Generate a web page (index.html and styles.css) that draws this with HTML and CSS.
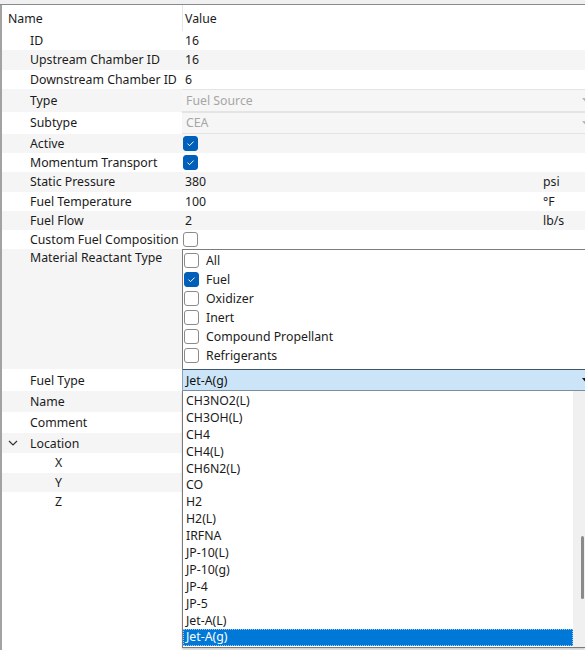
FILE: index.html
```html
<!DOCTYPE html>
<html>
<head>
<meta charset="utf-8">
<link rel="stylesheet" href="styles.css">
</head>
<body>
<div class="top"></div>
<div class="panel">
  <div class="row head"><div class="k">Name</div><div class="v">Value</div></div>
  <div class="row"><div class="k">ID</div><div class="v">16</div></div>
  <div class="row alt"><div class="k">Upstream Chamber ID</div><div class="v">16</div></div>
  <div class="row"><div class="k">Downstream Chamber ID</div><div class="v">6</div></div>
  <div class="row alt r23"><div class="k">Type</div><div class="v combo dis"><span>Fuel Source</span><svg class="arr" viewBox="0 0 7 4"><path d="M0 0 H7 L3.5 4 Z"/></svg></div></div>
  <div class="row r22"><div class="k">Subtype</div><div class="v combo dis"><span>CEA</span><svg class="arr" viewBox="0 0 7 4"><path d="M0 0 H7 L3.5 4 Z"/></svg></div></div>
  <div class="row alt"><div class="k">Active</div><div class="v cbv"><span class="cb on"><svg viewBox="0 0 15 15"><path d="M4 7.6 L6.4 10 L11 5.3" /></svg></span></div></div>
  <div class="row"><div class="k">Momentum Transport</div><div class="v cbv"><span class="cb on"><svg viewBox="0 0 15 15"><path d="M4 7.6 L6.4 10 L11 5.3" /></svg></span></div></div>
  <div class="row alt"><div class="k">Static Pressure</div><div class="v unitv"><span>380</span><span class="unit">psi</span></div></div>
  <div class="row"><div class="k">Fuel Temperature</div><div class="v unitv"><span>100</span><span class="unit">°F</span></div></div>
  <div class="row alt"><div class="k">Fuel Flow</div><div class="v unitv"><span>2</span><span class="unit">lb/s</span></div></div>
  <div class="row"><div class="k">Custom Fuel Composition</div><div class="v cbv"><span class="cb"></span></div></div>
  <div class="row mat">
    <div class="k alt">Material Reactant Type</div>
    <div class="v listbox">
      <div class="li"><span class="cb"></span>All</div>
      <div class="li"><span class="cb on"><svg viewBox="0 0 15 15"><path d="M4 7.6 L6.4 10 L11 5.3" /></svg></span>Fuel</div>
      <div class="li"><span class="cb"></span>Oxidizer</div>
      <div class="li"><span class="cb"></span>Inert</div>
      <div class="li"><span class="cb"></span>Compound Propellant</div>
      <div class="li"><span class="cb"></span>Refrigerants</div>
    </div>
  </div>
  <div class="row r22"><div class="k">Fuel Type</div><div class="v combo act"><span>Jet-A(g)</span><svg class="arr" viewBox="0 0 7 4"><path d="M0 0 H7 L3.5 4 Z"/></svg></div></div>
  <div class="row alt r21"><div class="k">Name</div><div class="v"></div></div>
  <div class="row r21"><div class="k">Comment</div><div class="v"></div></div>
  <div class="row alt r20"><div class="k grp"><svg class="chev" viewBox="0 0 10 6"><path d="M1 1 L5 5 L9 1"/></svg>Location</div><div class="v"></div></div>
  <div class="row"><div class="k sub">X</div><div class="v"></div></div>
  <div class="row alt"><div class="k sub">Y</div><div class="v"></div></div>
  <div class="row"><div class="k sub">Z</div><div class="v"></div></div>
</div>

<div class="dropdown">
  <div class="items">
    <div class="it">CH3NO2(L)</div>
    <div class="it">CH3OH(L)</div>
    <div class="it">CH4</div>
    <div class="it">CH4(L)</div>
    <div class="it">CH6N2(L)</div>
    <div class="it">CO</div>
    <div class="it">H2</div>
    <div class="it">H2(L)</div>
    <div class="it">IRFNA</div>
    <div class="it">JP-10(L)</div>
    <div class="it">JP-10(g)</div>
    <div class="it">JP-4</div>
    <div class="it">JP-5</div>
    <div class="it">Jet-A(L)</div>
    <div class="it sel">Jet-A(g)</div>
  </div>
  <div class="sbar"><div class="thumb"></div></div>
</div>
</body>
</html>
```

FILE: styles.css
```css
* { box-sizing: border-box; }
html, body { margin: 0; padding: 0; }
body {
  width: 585px;
  height: 650px;
  overflow: hidden;
  position: relative;
  background: #ffffff;
  font-family: "Noto Sans", "Open Sans", sans-serif;
  font-size: 12.3px;
  color: #1b1b1b;
}
.top {
  height: 5px;
  background: #f0f0f0;
  border-bottom: 1px solid #8a8a8a;
}
.panel {
  border-left: 2px solid #a2a2a2;
  height: 645px;
}
.row {
  display: grid;
  grid-template-columns: 180px 1fr;
  height: 19.25px;
  align-items: center;
  line-height: 17px;
}
.row.alt, .k.alt { background: #f5f5f5; }
.row.r23 { height: 23px; }
.row.r22 { height: 22px; }
.row.r21 { height: 21px; }
.row.r20 { height: 20px; }
.row.head { height: 26px; }
.row.head .k { padding-left: 6px; }
.row.head .v {
  height: 100%;
  display: flex;
  align-items: center;
  border-left: 1px solid #e6e6e6;
  padding-left: 2px;
}
.k {
  padding-left: 28px;
  white-space: nowrap;
}
.k.sub { padding-left: 53px; }
.k.grp {
  padding-left: 6px;
  display: flex;
  align-items: center;
}
.chev {
  width: 10px;
  height: 6px;
  margin-right: 12px;
  fill: none;
  stroke: #333;
  stroke-width: 1.2;
}
.v {
  padding-left: 3px;
  white-space: nowrap;
  height: 100%;
  display: flex;
  align-items: center;
}
.unitv .unit {
  margin-left: auto;
  width: 42px;
}
.cbv { padding-left: 1px; }
.cb {
  display: inline-block;
  width: 15px;
  height: 15px;
  border: 1px solid #8b8b8b;
  border-radius: 3px;
  background: #fff;
  flex: none;
}
.cb.on {
  background: #005fb8;
  border-color: #005fb8;
}
.cb svg {
  display: block;
  width: 13px;
  height: 13px;
  fill: none;
  stroke: #ffffff;
  stroke-width: 1.1;
  margin: 0;
}
.combo {
  justify-content: space-between;
  padding-right: 0;
}
.combo.dis {
  color: #a6a6a6;
  background: #f6f6f6;
  border-top: 1px solid #e4e4e4;
  border-bottom: 1px solid #e4e4e4;
  padding-left: 4px;
}
.combo .arr {
  width: 7px;
  height: 4px;
  margin-right: -4px;
  flex: none;
}
.combo.dis .arr { fill: #b8b8b8; }
.combo.act {
  background: #cce4f7;
  border-top: 1px solid #3e5669;
  border-bottom: 1px solid #7d8e9c;
  border-left: 1px solid #8aa3b8;
  color: #111;
  padding-left: 3px;
}
.combo.act .arr { fill: #111; }
.row.mat {
  height: 120px;
  align-items: stretch;
}
.listbox {
  display: block;
  border-top: 1px solid #7c7c7c;
  border-left: 1px solid #7c7c7c;
  background: #fff;
  padding: 1px 0 0 1px;
}
.li {
  height: 19px;
  display: flex;
  align-items: center;
  gap: 7px;
}
.dropdown {
  position: absolute;
  left: 182px;
  top: 391px;
  width: 403px;
  height: 257px;
  background: #fff;
  border-left: 1px solid #7a7a7a;
  border-bottom: 1px solid #7a7a7a;
  box-shadow: 0 2px 2px rgba(0,0,0,0.18);
  display: flex;
}
.items {
  flex: 1;
  padding-top: 2px;
}
.it {
  height: 16.9px;
  line-height: 16.9px;
  padding-left: 3px;
  white-space: nowrap;
}
.it.sel {
  background: #0078d7;
  color: #fff;
  outline: 1px dotted #9cc6ee;
  outline-offset: -1px;
}
.sbar {
  width: 12px;
  background: #f0f0f0;
  position: relative;
}
.thumb {
  position: absolute;
  left: 8px;
  top: 145px;
  width: 3px;
  height: 63px;
  border-radius: 2px;
  background: #8a8a8a;
}
```
